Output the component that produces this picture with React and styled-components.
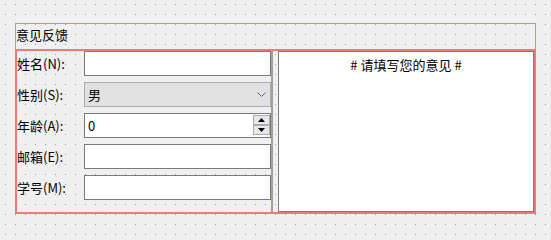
import React from "react";
import styled, { createGlobalStyle } from "styled-components";

const GlobalStyle = createGlobalStyle`
  html, body {
    margin: 0;
    padding: 0;
  }
  body {
    background-color: #f0f0f0;
    background-image: conic-gradient(at 1px 1px, transparent 270deg, #9a9a9a 0);
    background-size: 10px 10px;
    background-position: 5px 4px;
    font-family: "Noto Sans CJK SC", "Noto Sans", sans-serif;
    font-size: 13px;
    color: #000;
  }
`;

const fields = [
  { label: "姓名(N):", kind: "line" },
  { label: "性别(S):", kind: "combo", value: "男" },
  { label: "年龄(A):", kind: "spin", value: "0" },
  { label: "邮箱(E):", kind: "line" },
  { label: "学号(M):", kind: "line" },
];

const ChevronDown = () => (
  <svg width="9" height="5" viewBox="0 0 9 5">
    <polyline points="0.5,0.5 4.5,4.5 8.5,0.5" fill="none" stroke="#5c5c5c" strokeWidth="1" />
  </svg>
);

const Arrow = ({ up }) => (
  <svg width="7" height="4" viewBox="0 0 7 4">
    <polygon points={up ? "3.5,0 7,4 0,4" : "0,0 7,0 3.5,4"} fill="#000" />
  </svg>
);

const Field = ({ kind, value }) => {
  if (kind === "combo") {
    return (
      <Combo>
        <span>{value}</span>
        <ChevronDown />
      </Combo>
    );
  }
  if (kind === "spin") {
    return (
      <Spin>
        <span>{value}</span>
        <SpinButtons>
          <SpinButton>
            <Arrow up />
          </SpinButton>
          <SpinButton>
            <Arrow />
          </SpinButton>
        </SpinButtons>
      </Spin>
    );
  }
  return <LineEdit type="text" />;
};

const App = () => {
  return (
    <Page>
      <GlobalStyle />
      <GroupBox>
        <Title>意见反馈</Title>
        <LayoutFrame>
          <FormPane>
            {fields.map((f) => (
              <React.Fragment key={f.label}>
                <Label>{f.label}</Label>
                <Field kind={f.kind} value={f.value} />
              </React.Fragment>
            ))}
          </FormPane>
          <VLine />
          <TextEdit># 请填写您的意见 #</TextEdit>
        </LayoutFrame>
      </GroupBox>
    </Page>
  );
};

export default App;

const Page = styled.div`
  padding: 23px 0 0 15px;
`;

const GroupBox = styled.div`
  width: 521px;
  box-sizing: border-box;
  border: 1px solid #f27d7d;
  border-bottom: none;
  display: flex;
  flex-direction: column;
`;

const Title = styled.div`
  height: 25px;
  line-height: 22px;
  white-space: nowrap;
`;

const LayoutFrame = styled.div`
  margin: 0 -1px;
  height: 161px;
  border: 2px solid #f57777;
  display: flex;
`;

const FormPane = styled.div`
  width: 255px;
  box-sizing: border-box;
  border-right: 1px solid #f27d7d;
  display: grid;
  grid-template-columns: 67px 187px;
  grid-auto-rows: 25px;
  row-gap: 6px;
  align-content: start;
`;

const Label = styled.div`
  align-self: center;
  white-space: nowrap;
  line-height: 16px;
`;

const LineEdit = styled.input`
  box-sizing: border-box;
  width: 100%;
  height: 25px;
  margin: 0;
  padding: 0 3px;
  border: 1px solid #7a7a7a;
  border-radius: 0;
  background: #fff;
  font: inherit;
  outline: none;
`;

const Combo = styled.div`
  box-sizing: border-box;
  height: 25px;
  display: flex;
  align-items: center;
  justify-content: space-between;
  padding: 0 4px 0 3px;
  border: 1px solid #adadad;
  background: #e1e1e1;
`;

const Spin = styled.div`
  box-sizing: border-box;
  height: 25px;
  display: flex;
  align-items: center;
  justify-content: space-between;
  padding: 0 0 0 3px;
  border: 1px solid #7a7a7a;
  background: #fff;
`;

const SpinButtons = styled.div`
  align-self: stretch;
  display: flex;
  flex-direction: column;
  padding: 1px 0 2px;
`;

const SpinButton = styled.div`
  box-sizing: border-box;
  width: 17px;
  height: 10px;
  display: flex;
  align-items: center;
  justify-content: center;
  border: 1px solid #adadad;
  background: #e8e8e8;
`;

const VLine = styled.div`
  width: 1px;
  margin-right: 5px;
  background: #a0a0a0;
`;

const TextEdit = styled.div`
  flex: 1;
  box-sizing: border-box;
  border: 1px solid #7a7a7a;
  background: #fff;
  padding-top: 4px;
  line-height: 18px;
  text-align: center;
  white-space: nowrap;
`;
